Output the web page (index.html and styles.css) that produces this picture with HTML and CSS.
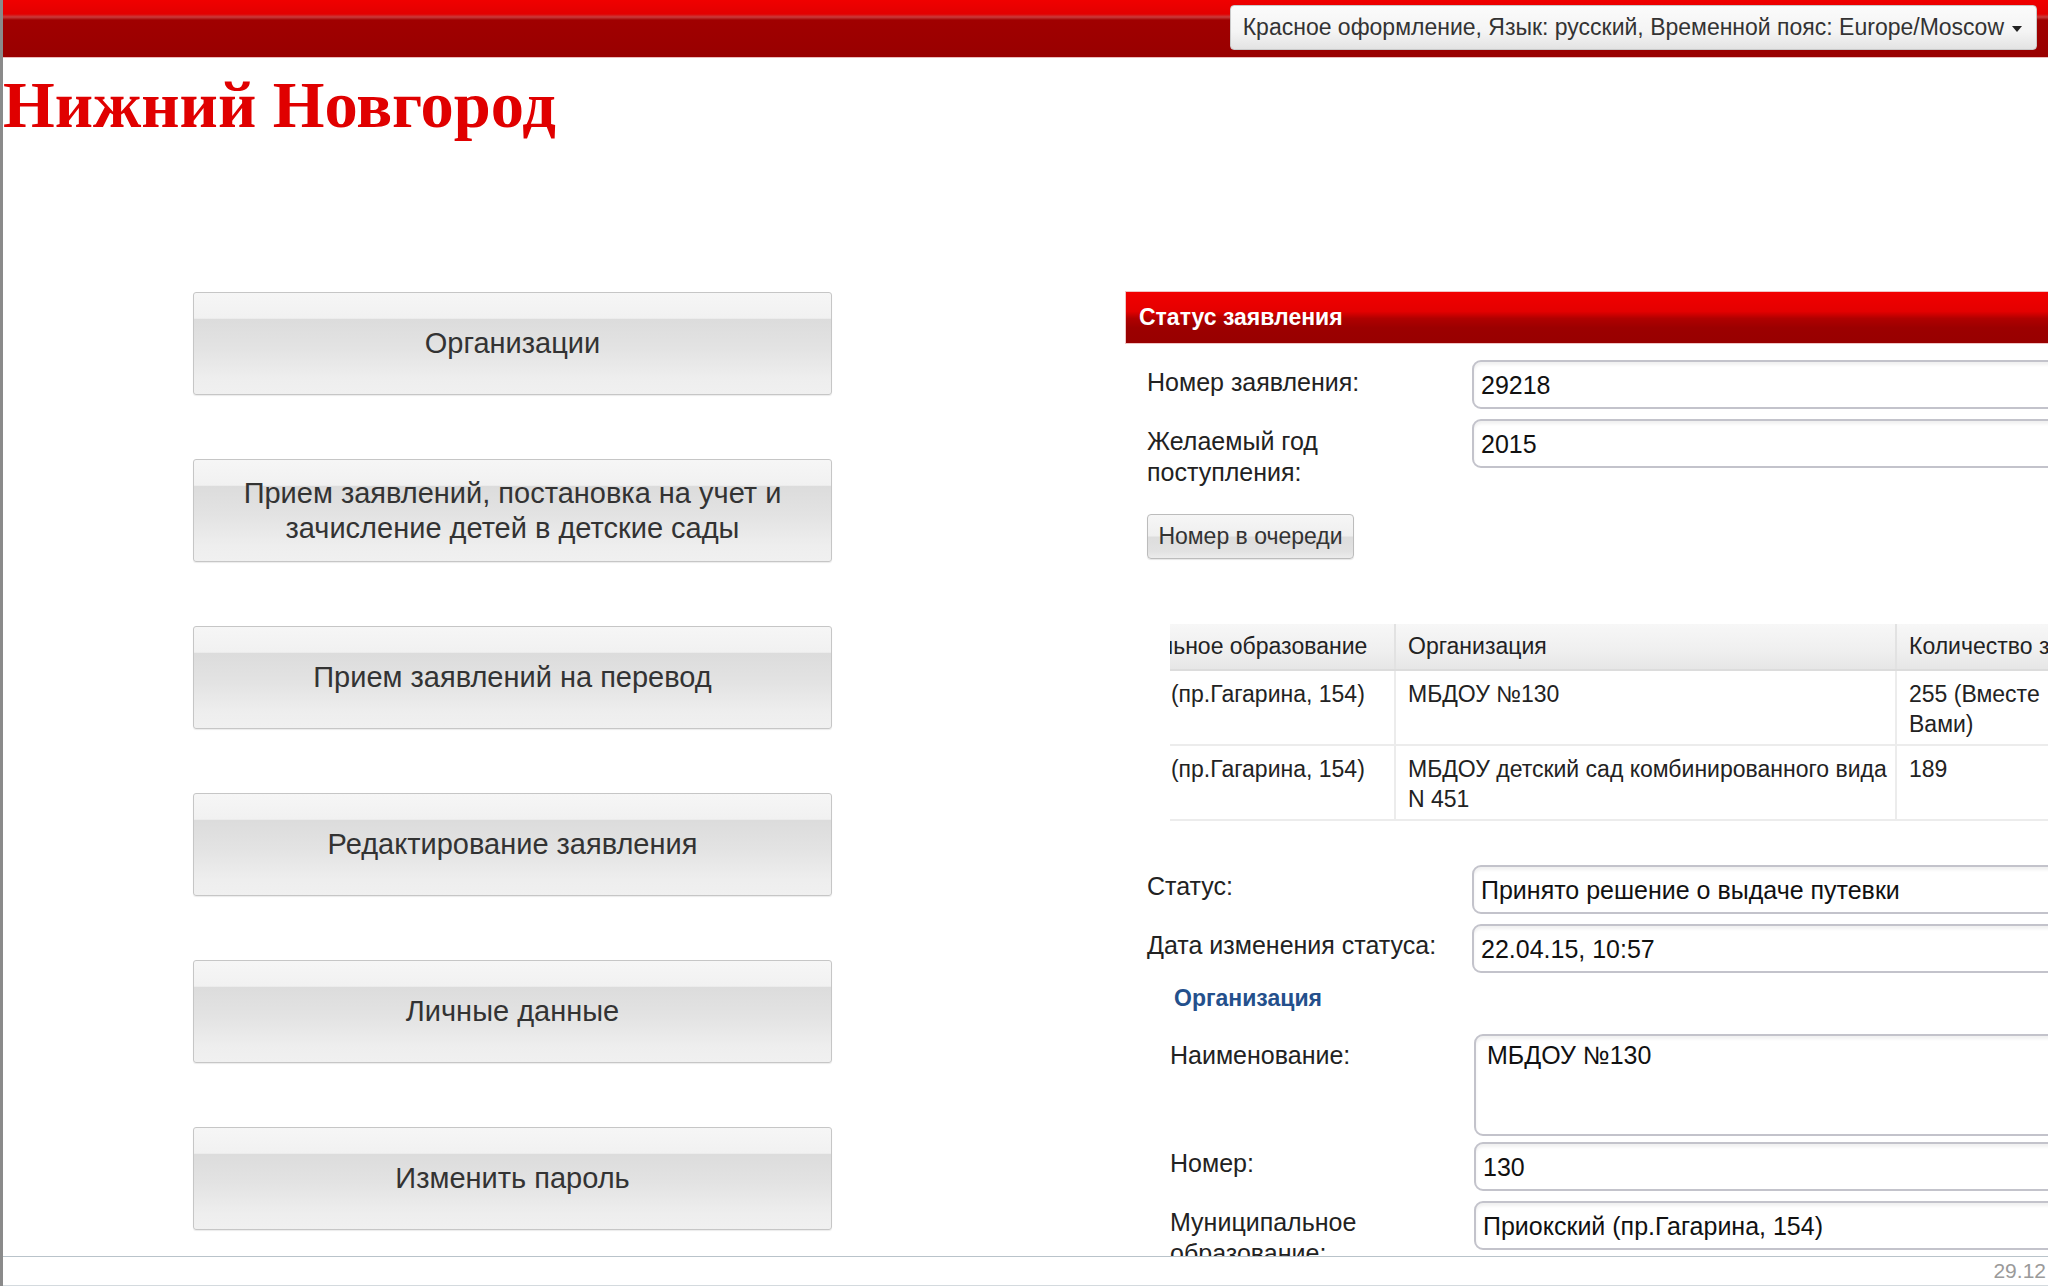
FILE: index.html
```html
<!DOCTYPE html>
<html lang="ru">
<head>
<meta charset="utf-8">
<title>Нижний Новгород</title>
<link rel="stylesheet" href="styles.css">
</head>
<body>
<header class="topbar">
  <div class="prefs">Красное оформление, Язык: русский, Временной пояс: Europe/Moscow <span class="caret"></span></div>
</header>
<main class="main">
  <h1 class="city">Нижний Новгород</h1>
  <div class="columns">
    <nav class="menu">
      <div class="menu-btn">Организации</div>
      <div class="menu-btn">Прием заявлений, постановка на учет и<br>зачисление детей в детские сады</div>
      <div class="menu-btn">Прием заявлений на перевод</div>
      <div class="menu-btn">Редактирование заявления</div>
      <div class="menu-btn">Личные данные</div>
      <div class="menu-btn">Изменить пароль</div>
    </nav>
    <section class="panel">
      <div class="panel-head">Статус заявления</div>
      <div class="form">
        <div class="row">
          <div class="label">Номер заявления:</div>
          <div class="field">29218</div>
        </div>
        <div class="row">
          <div class="label">Желаемый год<br>поступления:</div>
          <div class="field">2015</div>
        </div>
        <div class="queue-btn">Номер в очереди</div>
        <div class="grid-wrap">
          <table class="grid">
            <colgroup><col class="c1"><col class="c2"><col class="c3"></colgroup>
            <thead>
              <tr><th>Муниципальное образование</th><th>Организация</th><th>Количество заявлений</th></tr>
            </thead>
            <tbody>
              <tr><td>Приокский (пр.Гагарина, 154)</td><td>МБДОУ №130</td><td>255 (Вместе<br>Вами)</td></tr>
              <tr><td>Приокский (пр.Гагарина, 154)</td><td>МБДОУ детский сад комбинированного вида<br>N 451</td><td>189</td></tr>
            </tbody>
          </table>
        </div>
        <div class="row status-row">
          <div class="label">Статус:</div>
          <div class="field">Принято решение о выдаче путевки</div>
        </div>
        <div class="row">
          <div class="label">Дата изменения статуса:</div>
          <div class="field">22.04.15, 10:57</div>
        </div>
        <div class="org-title">Организация</div>
        <div class="org">
          <div class="row org-row">
            <div class="label">Наименование:</div>
            <div class="field area">МБДОУ №130</div>
          </div>
          <div class="row org-row tight">
            <div class="label">Номер:</div>
            <div class="field">130</div>
          </div>
          <div class="row org-row">
            <div class="label">Муниципальное<br>образование:</div>
            <div class="field">Приокский (пр.Гагарина, 154)</div>
          </div>
        </div>
      </div>
    </section>
  </div>
</main>
<footer class="footer"><span class="ver">29.12</span></footer>
</body>
</html>
```
FILE: styles.css
```css
html, body {
  margin: 0;
  padding: 0;
}
body {
  width: 2048px;
  height: 1286px;
  overflow: hidden;
  box-sizing: border-box;
  border-left: 3px solid #8a8a8a;
  font-family: "Liberation Sans", Arial, sans-serif;
  color: #222;
  background: #fff;
  display: flex;
  flex-direction: column;
}
.topbar {
  flex: 0 0 auto;
  height: 58px;
  box-sizing: border-box;
  padding-top: 5px;
  border-bottom: 1px solid #ecbcbc;
  background: linear-gradient(to bottom, #f00000 0px, #e30000 14px, #c83c3c 17px, #a00000 20px, #990000 100%);
  display: flex;
  justify-content: flex-end;
  align-items: flex-start;
}
.prefs {
  height: 45px;
  box-sizing: border-box;
  margin-right: 11px;
  padding: 0 14px 0 12px;
  border: 1px solid #c9c9c9;
  border-radius: 4px;
  background: linear-gradient(to bottom, #fbfbfb 0%, #f4f4f4 60%, #e3e3e3 100%);
  color: #333;
  font-size: 23px;
  line-height: 43px;
  white-space: nowrap;
  display: flex;
  align-items: center;
  gap: 8px;
}
.caret {
  width: 0;
  height: 0;
  border-left: 5px solid transparent;
  border-right: 5px solid transparent;
  border-top: 6px solid #222;
  margin-top: 3px;
}
.main {
  flex: 1 1 auto;
  overflow: hidden;
  min-height: 0;
}
.city {
  margin: 13px 0 0 0;
  font-family: "Liberation Serif", "Times New Roman", serif;
  font-weight: bold;
  font-size: 66.5px;
  line-height: 68px;
  color: #e00000;
}
.columns {
  display: flex;
  align-items: flex-start;
  margin-top: 153px;
  padding-left: 190px;
}
.menu {
  flex: 0 0 639px;
  width: 639px;
  margin-right: 294px;
  display: flex;
  flex-direction: column;
  gap: 64px;
}
.menu-btn {
  height: 101px;
  border: 1px solid #c6c6c6;
  border-radius: 3px;
  box-shadow: 0 1px 1px rgba(0,0,0,0.08);
  background: linear-gradient(to bottom, #f6f6f6 0%, #f1f1f1 25%, #dcdcdc 26%, #e3e3e3 55%, #eeeeee 85%, #f0f0f0 100%);
  color: #333;
  font-size: 29px;
  line-height: 35px;
  text-align: center;
  display: flex;
  align-items: center;
  justify-content: center;
}
.panel {
  flex: 0 0 1000px;
  width: 1000px;
}
.panel-head {
  height: 51px;
  line-height: 51px;
  padding-left: 13px;
  box-sizing: border-box;
  background: linear-gradient(to bottom, #f20000 0%, #e40000 38%, #b00000 52%, #9c0000 70%, #980000 100%);
  box-shadow: 0 0 0 1px #f0c4c4;
  color: #fff;
  font-weight: bold;
  font-size: 23px;
}
.form {
  padding-top: 17px;
}
.row {
  display: grid;
  grid-template-columns: 346px 1fr;
  margin-bottom: 10px;
  align-items: start;
}
.label {
  padding-left: 21px;
  padding-top: 7px;
  font-size: 25px;
  line-height: 31px;
  color: #222;
}
.field {
  height: 49px;
  box-sizing: border-box;
  border: 2px solid #c3c3cb;
  border-radius: 9px;
  box-shadow: inset 0 3px 3px rgba(0,0,0,0.06);
  background: #fff;
  padding-left: 7px;
  font-size: 25px;
  line-height: 47px;
  color: #111;
  white-space: nowrap;
}
.queue-btn {
  margin: 26px 0 0 21px;
  width: 207px;
  height: 45px;
  box-sizing: border-box;
  border: 1px solid #bcbcbc;
  border-radius: 4px;
  box-shadow: 0 1px 1px rgba(0,0,0,0.1);
  background: linear-gradient(to bottom, #f6f6f6 0%, #efefef 48%, #dddddd 52%, #e2e2e2 85%, #ececec 100%);
  color: #333;
  font-size: 23px;
  line-height: 43px;
  text-align: center;
  white-space: nowrap;
}
.grid-wrap {
  margin: 65px 0 0 44px;
  overflow: hidden;
}
.grid {
  margin-left: -130px;
  border-collapse: collapse;
  table-layout: fixed;
  width: 1156px;
  font-size: 23px;
  color: #222;
}
.grid .c1 { width: 355px; }
.grid .c2 { width: 501px; }
.grid .c3 { width: 300px; }
.grid th {
  height: 45px;
  padding: 0 12px;
  font-weight: normal;
  text-align: left;
  white-space: nowrap;
  overflow: hidden;
  background: linear-gradient(to bottom, #f7f7f7 0%, #efefef 60%, #e6e6e6 100%);
  border-left: 2px solid #e2e2e2;
  border-bottom: 2px solid #dcdcdc;
}
.grid th:first-child { border-left: 0; }
.grid td {
  height: 75px;
  box-sizing: border-box;
  padding: 8px 4px 0 12px;
  vertical-align: top;
  line-height: 30px;
  white-space: nowrap;
  border-left: 2px solid #ececec;
  border-bottom: 2px solid #ececec;
}
.grid td:first-child { border-left: 0; }
.status-row {
  margin-top: 44px;
}
.status-row .label,
.status-row + .row .label {
  padding-top: 6px;
}
.org-title {
  margin: 0 0 20px 0;
  padding-left: 48px;
  font-size: 23px;
  font-weight: bold;
  line-height: 31px;
  color: #24508c;
}
.org-row {
  grid-template-columns: 348px 1fr;
}
.org-row .label {
  padding-left: 44px;
  padding-top: 6px;
}
.org .tight { margin-top: -4px; }
.field.area {
  height: 102px;
  padding: 4px 0 0 11px;
  line-height: 31px;
}
.footer {
  flex: 0 0 auto;
  height: 30px;
  box-sizing: border-box;
  border-top: 1px solid #b9c3ca;
  border-bottom: 1px solid #d4dade;
  background: #fff;
  display: flex;
  justify-content: flex-end;
  align-items: center;
  padding-right: 2px;
}
.ver {
  font-size: 21px;
  color: #9a9a9a;
}
```
